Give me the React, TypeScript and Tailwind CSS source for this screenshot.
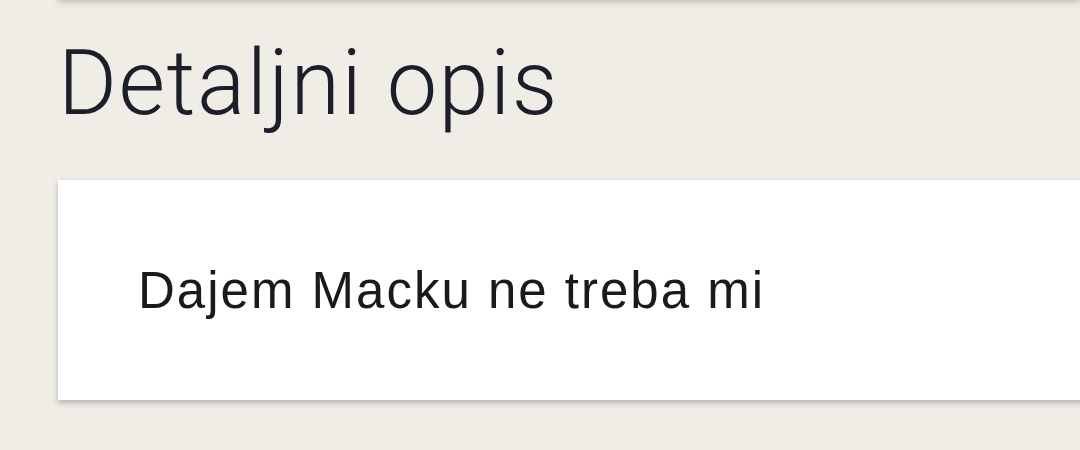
export default function App() {
  return (
    <div className="w-[1080px] h-[450px] overflow-hidden bg-[#f0ede7]">
      <div className="ml-[58px] -mt-[20px] h-[20px] bg-[#fafafa] shadow-[0_2px_6px_rgba(0,0,0,0.22)]" />
      <div className="pl-[58px] pt-[39px]">
        <h2
          className="text-[90px] leading-[90px] font-light text-[#1c1f2a] tracking-[1.5px]"
          style={{ fontFamily: "Roboto, 'Noto Sans', sans-serif" }}
        >
          Detaljni opis
        </h2>
        <div className="mt-[51px] h-[220px] w-[1100px] bg-white shadow-[0_3px_6px_rgba(0,0,0,0.25)] pl-[80px] pt-[85px]">
          <p
            className="text-[51px] leading-[51px] text-[#1a1a1a] tracking-[2px]"
            style={{ fontFamily: "'Liberation Sans', Arial, sans-serif" }}
          >
            Dajem Macku ne treba mi
          </p>
        </div>
      </div>
    </div>
  );
}
